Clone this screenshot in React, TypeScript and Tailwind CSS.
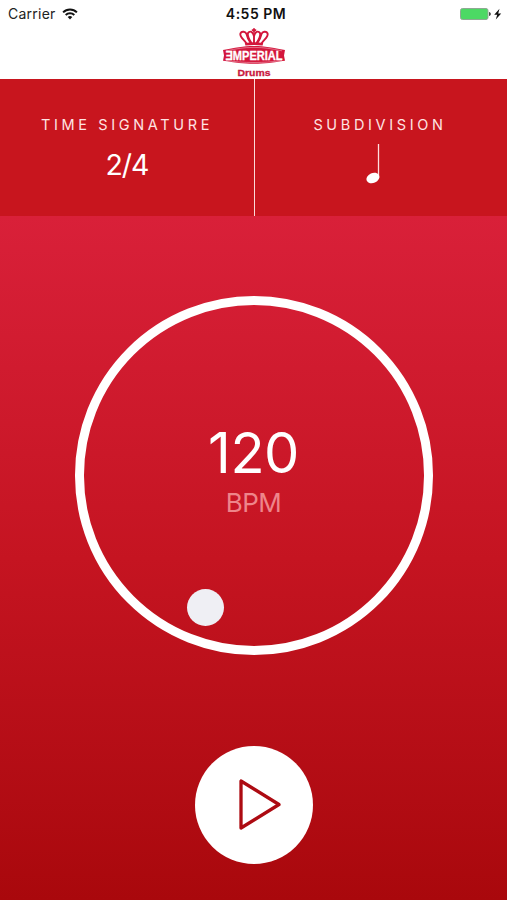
function WifiIcon() {
  return (
    <svg className="ml-[6px] h-[12px] w-[16px]" viewBox="0 0 16 12" fill="none" stroke="#111" strokeWidth="2">
      <path d="M1.1 4.4a9.8 9.8 0 0 1 13.8 0" />
      <path d="M3.7 7a6.1 6.1 0 0 1 8.6 0" />
      <path d="M8 11.5L5.7 9.1a3.3 3.3 0 0 1 4.6 0Z" fill="#111" stroke="none" />
    </svg>
  );
}

function BatteryIcon() {
  return (
    <svg className="h-[14px] w-[43px]" viewBox="0 0 43 14">
      <rect x="0.5" y="1.5" width="27.5" height="11" rx="2" fill="#4cd964" stroke="#8fa893" />
      <path d="M29.2 5v4c2-.5 2-3.500 0-4Z" fill="#222" />
      <path d="M39.500 1.800L34.200 7.700h3l-1.400 4.700 5.400-6h-3Z" fill="#111" />
    </svg>
  );
}

function ImperialLogo() {
  return (
    <svg className="h-[50px] w-[64px]" viewBox="0 0 64 50" fill="none">
      <g stroke="#d3163c" strokeWidth="1.9">
        <path d="M24.500 15.500C22.500 12 17.300 9 18.400 5.500c1.300-2.900 5.300-2 6.200.8.600 3 2 5.700 4 8.700" />
        <path d="M39.500 15.500c2-3.500 7.200-6.500 6.100-10-1.300-2.900-5.300-2-6.200.8-.6 3-2 5.700-4 8.700" />
        <path d="M29.500 15.200C27 11 24 6.500 26.700 4.200c2.600-1.800 4.900 1.200 5.300 4.300.4-3.100 2.700-6.100 5.300-4.300C40 6.500 37 11 34.500 15.200" />
        <path d="M32 8v7.500" />
      </g>
      <path d="M32 .3v4.500M29.800 2.200h4.400" stroke="#d3163c" strokeWidth="1.800" />
      <path d="M22.800 15q9.200-1.400 18.400 0l-.6 2.400q-8.600-1-17.200 0Z" fill="#d3163c" />
      <path d="M1 22C13 20 21 18 32 18s19 2 31 4L62 27.500l1 5.300C51 34.500 43 35.800 32 35.800S13 34.500 1 32.800l1-5.300Z" fill="#d3163c" />
      <path d="M4 22.800C15 20.800 21 19.400 32 19.400S49 20.800 60 22.800M4 32.700C15 33.900 21 34.500 32 34.500s17-.6 28-1.800" stroke="#f3c2cc" strokeWidth=".5" />
      <g transform="translate(3.500 31.700) scale(1 1.36)">
        <text x="0" y="0" textLength="57" lengthAdjust="spacingAndGlyphs" fill="white" stroke="white" strokeWidth=".25" className="font-['Liberation_Sans',sans-serif] text-[10px] font-bold">ƎMPERIAL</text>
      </g>
      <text x="15.500" y="47.500" textLength="33" lengthAdjust="spacingAndGlyphs" fill="#c9183d" stroke="#c9183d" strokeWidth=".3" className="font-['Liberation_Sans',sans-serif] text-[9.5px] font-bold">Drums</text>
    </svg>
  );
}

function StatusBar() {
  return (
    <div className="grid h-7 grid-cols-3 items-center text-[14px] leading-7 text-[#222]">
      <div className="flex items-center pb-[2px] pl-[8px]">
        <span className="tracking-[0.25px]">Carrier</span>
        <WifiIcon />
      </div>
      <div className="pb-[2px] pl-[5px] text-center font-semibold tracking-[0.5px] text-[#111]">4:55 PM</div>
      <div className="flex justify-end pr-[4px] pb-[2px]">
        <BatteryIcon />
      </div>
    </div>
  );
}

export default function App() {
  return (
    <main className="flex h-[900px] w-[507px] flex-col overflow-hidden bg-white font-['Inter',sans-serif]">
      <header className="h-[79px] shrink-0">
        <StatusBar />
        <div className="flex justify-center pl-px">
          <ImperialLogo />
        </div>
      </header>

      <section className="flex h-[137px] shrink-0 bg-[#c8151e] text-white">
        <button className="flex w-[254px] flex-col items-center pt-[37px]">
          <span className="text-[14.5px] leading-[18px] tracking-[3.65px] whitespace-nowrap text-[#ffe3e3]">TIME SIGNATURE</span>
          <span className="mt-[12px] text-[28.5px] leading-[38px] tracking-[-1px]">2/4</span>
        </button>
        <div className="w-px bg-[#fbdada]" />
        <button className="flex flex-1 flex-col items-center pt-[37px]">
          <span className="mr-[2px] text-[14.5px] leading-[18px] tracking-[3.65px] text-[#ffe3e3]">SUBDIVISION</span>
          <svg className="mt-[9px] mr-[16px] h-[42px] w-[16px]" viewBox="0 0 16 42">
            <path d="M13.500 1v34" stroke="#ffdede" strokeWidth="1.300" />
            <ellipse cx="7.900" cy="35" rx="6.700" ry="5" transform="rotate(-24 7.900 35)" fill="white" />
          </svg>
        </button>
      </section>

      <section className="flex flex-1 flex-col items-center bg-linear-to-b from-[#d92039] via-[#c51421] to-[#a9080c]">
        <div className="relative mt-[80px] mr-[-1px] flex h-[359px] w-[358px] flex-col items-center rounded-full border-[9px] border-white pt-[114px]">
          <span className="mr-px text-[56px] leading-[68px] tracking-[-0.5px] text-white">120</span>
          <span className="mr-px text-[26px] leading-[32px] tracking-[-0.5px] text-[#ee858a]">BPM</span>
          <span className="absolute top-[284px] left-[103px] h-[37px] w-[37px] rounded-full bg-[#efeff4]" />
        </div>
        <button className="mt-[91px] mr-[-1px] flex h-[118px] w-[118px] items-center justify-center rounded-full bg-white" aria-label="Play">
          <svg className="mb-[2px] ml-[12px] h-[54px] w-[44px]" viewBox="0 0 44 54" fill="none">
            <path d="M3 4v47L41 27.500Z" stroke="#ad0b12" strokeWidth="3.300" strokeLinejoin="round" />
          </svg>
        </button>
      </section>
    </main>
  );
}
